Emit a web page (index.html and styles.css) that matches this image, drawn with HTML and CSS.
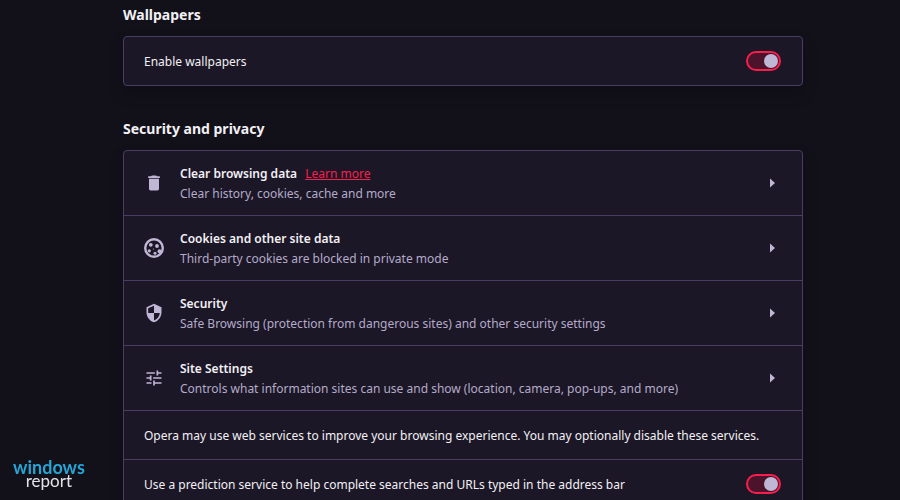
FILE: index.html
```html
<!DOCTYPE html>
<html lang="en">
<head>
    <meta charset="UTF-8">
    <meta name="viewport" content="width=device-width, initial-scale=1.0">
    <title>Settings</title>
    <link rel="stylesheet" href="styles.css">
</head>
<body>

<main class="settings">
    <section>
        <h2>Wallpapers</h2>
        <div class="card">
            <div class="row">
                <label for="wallpapers">Enable wallpapers</label>
                <input type="checkbox" class="toggle" id="wallpapers" checked>
            </div>
        </div>
    </section>

    <section>
        <h2>Security and privacy</h2>
        <div class="card">
            <div class="row link-row">
                <svg class="icon" viewBox="0 0 24 24"><path d="M6 19c0 1.1.9 2 2 2h8c1.100 0 2-.9 2-2V7H6v12zM19 4h-3.500l-1-1h-5l-1 1H5v2h14V4z"/></svg>
                <div class="text">
                    <h3>Clear browsing data <a href="#">Learn more</a></h3>
                    <p>Clear history, cookies, cache and more</p>
                </div>
                <svg class="icon" viewBox="0 0 20 20"><path d="M8 5.500l5 4.500-5 4.500z"/></svg>
            </div>
            <div class="row link-row">
                <svg class="icon" viewBox="0 0 20 20">
                    <circle class="ring" cx="10" cy="10" r="8.800"/>
                    <circle cx="6.800" cy="6.800" r="1.900"/>
                    <circle cx="13" cy="8" r="1.900"/>
                    <circle cx="5.300" cy="12.800" r="1.600"/>
                    <circle cx="11" cy="15.300" r="1.500"/>
                    <circle cx="15.500" cy="13.300" r="2"/>
                    <circle cx="9.500" cy="11" r=".6"/>
                </svg>
                <div class="text">
                    <h3>Cookies and other site data</h3>
                    <p>Third-party cookies are blocked in private mode</p>
                </div>
                <svg class="icon" viewBox="0 0 20 20"><path d="M8 5.500l5 4.500-5 4.500z"/></svg>
            </div>
            <div class="row link-row">
                <svg class="icon" viewBox="0 0 24 24"><path d="M12 1L3 5v6c0 5.550 3.840 10.740 9 12 5.160-1.260 9-6.450 9-12V5l-9-4zm0 10.990h7c-.53 4.120-3.280 7.790-7 8.940V12H5V6.300l7-3.110v8.800z"/></svg>
                <div class="text">
                    <h3>Security</h3>
                    <p>Safe Browsing (protection from dangerous sites) and other security settings</p>
                </div>
                <svg class="icon" viewBox="0 0 20 20"><path d="M8 5.500l5 4.500-5 4.500z"/></svg>
            </div>
            <div class="row link-row">
                <svg class="icon" viewBox="0 0 24 24"><path d="M3 17v2h6v-2H3zM3 5v2h10V5H3zm10 16v-2h8v-2h-8v-2h-2v6h2zM7 9v2H3v2h4v2h2V9H7zm14 4v-2H11v2h10zm-6-4h2V7h4V5h-4V3h-2v6z"/></svg>
                <div class="text">
                    <h3>Site Settings</h3>
                    <p>Controls what information sites can use and show (location, camera, pop-ups, and more)</p>
                </div>
                <svg class="icon" viewBox="0 0 20 20"><path d="M8 5.500l5 4.500-5 4.500z"/></svg>
            </div>
            <div class="row">
                <span>Opera may use web services to improve your browsing experience. You may optionally disable these services.</span>
            </div>
            <div class="row">
                <label for="prediction">Use a prediction service to help complete searches and URLs typed in the address bar</label>
                <input type="checkbox" class="toggle" id="prediction" checked>
            </div>
        </div>
    </section>
</main>

<div class="logo">
    <span class="logo-top">windows</span>
    <span class="logo-bottom">report</span>
</div>

</body>
</html>
```
FILE: styles.css
```css
* {
    box-sizing: border-box;
}
body {
    margin: 0;
    height: 100vh;
    overflow: hidden;
    background-color: #121019;
    color: #f2f0f5;
    font-family: "Segoe UI", "Noto Sans", sans-serif;
    font-size: 12px;
    line-height: 20px;
}
h2, h3, p {
    margin: 0;
}
.settings {
    max-width: 706px;
    margin: 0 auto;
    padding: 5px 0 0 26px;
}
section {
    margin-bottom: 33px;
}
h2 {
    margin-bottom: 11px;
    font-size: 14px;
    font-weight: 700;
}
.card {
    background-color: #1c1726;
    border: 1px solid #493d66;
    border-radius: 4px;
    box-shadow: 0 8px 16px rgba(0, 0, 0, 0.2);
}
.row {
    display: flex;
    align-items: center;
    justify-content: space-between;
    min-height: 48px;
    padding: 0 20px;
}
.row + .row {
    border-top: 1px solid #493d66;
    min-height: 49px;
}
.row.link-row {
    gap: 16px;
    min-height: 65px;
}
.row.link-row:first-child {
    min-height: 64px;
}
.row label, .row span, .text {
    padding-top: 2px;
}
.text {
    flex: 1;
}
h3 {
    font-size: 12px;
    font-weight: 600;
}
h3 a {
    margin-left: 5px;
    color: #fa1e4e;
    font-weight: 400;
}
p {
    color: #b3abc9;
}
.icon {
    flex: none;
    width: 20px;
    height: 20px;
    fill: #c0b6d6;
}
.ring {
    fill: none;
    stroke: #c0b6d6;
    stroke-width: 2.4;
}
.toggle {
    appearance: none;
    display: flex;
    flex: none;
    align-items: center;
    width: 35px;
    height: 20px;
    margin: 0 1px 0 0;
    padding: 0 1px;
    background-color: #4b142b;
    border: 2px solid #fa1e4e;
    border-radius: 10px;
}
.toggle::before {
    content: "";
    width: 14px;
    height: 14px;
    border-radius: 50%;
    background-color: #c0b6d6;
}
.toggle:checked {
    justify-content: flex-end;
}
.logo {
    position: fixed;
    left: 13px;
    bottom: 12px;
    display: flex;
    flex-direction: column;
    align-items: center;
    font-family: Lato, sans-serif;
    line-height: 14px;
}
.logo-top {
    color: #25a5d6;
    font-size: 18px;
    font-weight: 700;
}
.logo-bottom {
    color: #e4e4e8;
    font-size: 17px;
}
```
